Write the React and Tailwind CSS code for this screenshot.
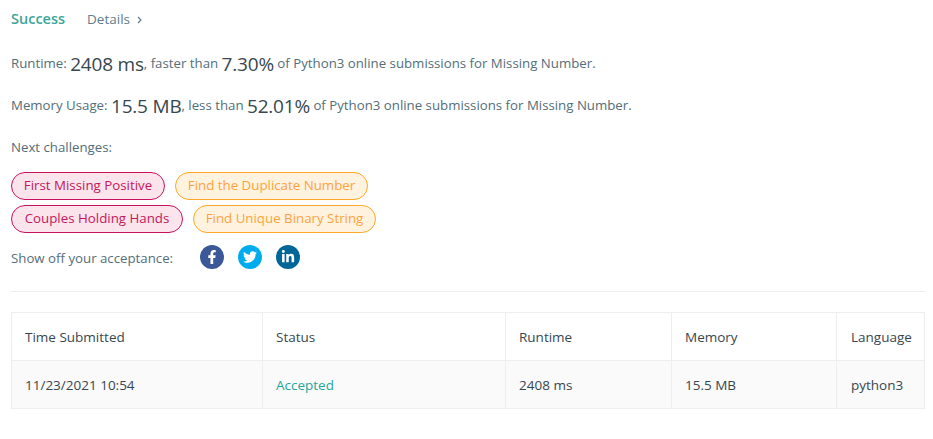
import React from 'react';
import { FaFacebookF, FaTwitter, FaLinkedinIn } from 'react-icons/fa';

const CHALLENGE_ROWS = [
  [
    { name: 'First Missing Positive', hard: true, width: 'w-[154px]' },
    { name: 'Find the Duplicate Number', hard: false, width: 'w-[193px]' },
  ],
  [
    { name: 'Couples Holding Hands', hard: true, width: 'w-[172px]' },
    { name: 'Find Unique Binary String', hard: false, width: 'w-[183px]' },
  ],
];

const COLUMNS = [
  { title: 'Time Submitted', value: '11/23/2021 10:54', width: 'w-[250px]', pad: 'px-[13px]' },
  { title: 'Status', value: 'Accepted', width: 'w-[243px]', pad: 'px-[13px]', accent: true },
  { title: 'Runtime', value: '2408 ms', width: 'w-[166px]', pad: 'px-[13px]' },
  { title: 'Memory', value: '15.5 MB', width: 'w-[165px]', pad: 'px-[13px]' },
  { title: 'Language', value: 'python3', width: 'flex-1', pad: 'pl-[14px]' },
];

function Big({ children }) {
  return <span className="text-[19px] tracking-[-0.2px] leading-none text-[#37474f]">{children}</span>;
}

function Challenge({ name, hard, width }) {
  const color = hard
    ? 'border-[#c9105f] bg-[#fce4ec] text-[#c2185b]'
    : 'border-[#ffa726] bg-[#fff3e0] text-[#ffa23c]';
  return (
    <a className={`h-[28px] rounded-full border flex items-center justify-center text-[13.3px] ${width} ${color}`}>
      {name}
    </a>
  );
}

function Social({ color, children }) {
  return (
    <span className={`w-6 h-6 rounded-full flex items-center justify-center text-white text-[14px] ${color}`}>
      {children}
    </span>
  );
}

export default function App() {
  return (
    <div className="w-[933px] h-[439px] bg-white px-[11px] text-[13.25px] text-[#546e7a] overflow-hidden font-['Open_Sans','Noto_Sans',sans-serif]">
      {/* Header */}
      <div className="flex items-center h-[38px]">
        <span className="text-[14.5px] font-semibold text-[#3da69a]">Success</span>
        <span className="ml-[22px] text-[13.5px] text-[#607d8b]">Details</span>
        <svg className="ml-[7px] mt-[2px] w-[5px] h-[8px]" viewBox="0 0 5 8" fill="none" stroke="#607d8b" strokeWidth="1.2">
          <path d="M1 1l3 3-3 3" />
        </svg>
      </div>

      <div className="mt-[11px] h-[30px] flex items-center whitespace-pre">
        Runtime: <Big>2408 ms</Big>, faster than <Big>7.30%</Big> of Python3 online submissions for Missing Number.
      </div>
      <div className="mt-[12px] h-[30px] flex items-center whitespace-pre">
        Memory Usage: <Big>15.5 MB</Big>, less than <Big>52.01%</Big> of Python3 online submissions for Missing Number.
      </div>
      <div className="mt-[17px] h-[20px] flex items-center">Next challenges:</div>

      {/* Challenges */}
      <div className="mt-[14px] flex flex-col gap-[5px]">
        {CHALLENGE_ROWS.map((row, i) => (
          <div key={i} className="flex gap-[10px]">
            {row.map(c => <Challenge key={c.name} {...c} />)}
          </div>
        ))}
      </div>

      <div className="mt-[13px] h-[26px] flex items-center">
        <span className="w-[189px]">Show off your acceptance:</span>
        <div className="flex gap-[14px] mb-[4px]">
          <Social color="bg-[#3b5998]"><FaFacebookF /></Social>
          <Social color="bg-[#00aced]"><FaTwitter /></Social>
          <Social color="bg-[#006699]"><FaLinkedinIn /></Social>
        </div>
      </div>

      <div className="mt-[19px] w-[914px] border-t border-[#eeeeee]" />

      {/* Submission table */}
      <div className="mt-[20px] w-[914px] border border-[#eeeeee] flex text-[#37474f] text-[13.5px]">
        {COLUMNS.map((col, i) => (
          <div key={col.title} className={`${col.width} ${i > 0 ? 'border-l border-[#eeeeee]' : ''}`}>
            <div className={`h-[47px] pt-[2px] flex items-center bg-white ${col.pad}`}>{col.title}</div>
            <div className={`h-[48px] pt-[2px] flex items-center bg-[#fafafa] border-t border-[#eeeeee] ${col.pad} ${col.accent ? 'text-[#26a69a]' : ''}`}>
              {col.value}
            </div>
          </div>
        ))}
      </div>
    </div>
  );
}
